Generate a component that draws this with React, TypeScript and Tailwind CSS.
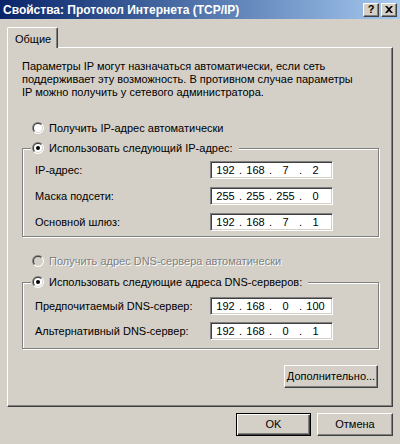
import React from "react";

const font = "font-['Liberation_Sans',Arial,sans-serif]";

function Radio({ checked, disabled }: { checked?: boolean; disabled?: boolean }) {
  return (
    <svg width="12" height="12" viewBox="0 0 12 12" className="shrink-0">
      <path d="M1.757 10.243 A6 6 0 0 1 10.243 1.757 Z" fill="#808080" />
      <path d="M1.757 10.243 A6 6 0 0 0 10.243 1.757 Z" fill="#ffffff" />
      <path d="M2.464 9.536 A5 5 0 0 1 9.536 2.464 Z" fill="#404040" />
      <path d="M2.464 9.536 A5 5 0 0 0 9.536 2.464 Z" fill="#d4d0c8" />
      <circle cx="6" cy="6" r="4" fill={disabled ? "#d4d0c8" : "#ffffff"} />
      {checked && <circle cx="6" cy="6" r="2" fill="#000000" />}
    </svg>
  );
}

function RadioRow({
  label,
  checked,
  disabled,
}: {
  label: string;
  checked?: boolean;
  disabled?: boolean;
}) {
  return (
    <div className="flex items-center h-[16px] gap-[5px]">
      <Radio checked={checked} disabled={disabled} />
      <span
        className={
          disabled
            ? "text-[#808080] [text-shadow:1px_1px_0_#ffffff] whitespace-nowrap"
            : "whitespace-nowrap"
        }
      >
        {label}
      </span>
    </div>
  );
}

function IpBox({ parts }: { parts: string[] }) {
  return (
    <div className="w-[123px] h-[18px] bg-white border border-t-[#808080] border-l-[#808080] border-b-white border-r-white shadow-[inset_1px_1px_0_#404040,inset_-1px_-1px_0_#d4d0c8] flex items-center pl-[1px]">
      {parts.map((p, i) => (
        <React.Fragment key={i}>
          <span className="w-[27px] text-center">{p}</span>
          {i < 3 && <span className="w-[3px] text-center">.</span>}
        </React.Fragment>
      ))}
    </div>
  );
}

function Field({ label, parts }: { label: string; parts: string[] }) {
  return (
    <div className="flex items-center">
      <span className="w-[175px] whitespace-nowrap">{label}</span>
      <IpBox parts={parts} />
    </div>
  );
}

function Group({
  legend,
  children,
  className,
}: {
  legend: React.ReactNode;
  children: React.ReactNode;
  className?: string;
}) {
  return (
    <div
      className={`border border-[#808080] shadow-[1px_1px_0_#ffffff,inset_1px_1px_0_#ffffff] flex flex-col pl-[12px] ${className}`}
    >
      <div className="-mt-[9px] -ml-[4px] self-start bg-[#d4d0c8] pl-[1px] pr-[6px]">
        {legend}
      </div>
      {children}
    </div>
  );
}

function Button({
  children,
  isDefault,
  className,
}: {
  children: React.ReactNode;
  isDefault?: boolean;
  className?: string;
}) {
  const frame = isDefault
    ? "border border-black shadow-[inset_1px_1px_0_#ffffff,inset_-1px_-1px_0_#404040,inset_-2px_-2px_0_#808080]"
    : "border border-t-white border-l-white border-b-[#404040] border-r-[#404040] shadow-[inset_-1px_-1px_0_#808080]";
  return (
    <button
      className={`h-[23px] bg-[#d4d0c8] flex items-center justify-center ${frame} ${className}`}
    >
      {children}
    </button>
  );
}

function CaptionButton({ children }: { children: React.ReactNode }) {
  return (
    <div className="w-[16px] h-[14px] bg-[#d4d0c8] border border-t-white border-l-white border-b-[#404040] border-r-[#404040] shadow-[inset_-1px_-1px_0_#808080] flex items-center justify-center">
      {children}
    </div>
  );
}

export default function App() {
  return (
    <div
      className={`w-[400px] h-[444px] bg-[#d4d0c8] flex flex-col text-[11px] text-black ${font}`}
    >
      {/* Title bar */}
      <div className="h-[19px] bg-gradient-to-r from-[#0a246a] to-[#a6caf0] flex items-center justify-between pl-[3px] pr-[3px]">
        <span className="text-white font-bold text-[12px] whitespace-nowrap">
          Свойства: Протокол Интернета (TCP/IP)
        </span>
        <div className="flex gap-[2px]">
          <CaptionButton>
            <span className="font-bold text-[11px] leading-none -mt-[1px]">?</span>
          </CaptionButton>
          <CaptionButton>
            <svg width="8" height="7" viewBox="0 0 8 7">
              <path d="M0 0 L2 0 L4 2 L6 0 L8 0 L5 3.5 L8 7 L6 7 L4 5 L2 7 L0 7 L3 3.5 Z" fill="#000" />
            </svg>
          </CaptionButton>
        </div>
      </div>

      <div className="pl-[7px] pt-[8px]">
        {/* Tab strip */}
        <div className="flex h-[20px]">
          <div className="relative z-10 h-[21px] w-[51px] bg-[#d4d0c8] border-t border-l border-white border-r border-r-[#404040] shadow-[inset_-1px_0_0_#808080] rounded-t-[2px] flex items-start pl-[7px] pt-[3px]">
            Общие
          </div>
        </div>

        {/* Panel */}
        <div className="w-[386px] h-[360px] border border-t-white border-l-white border-b-[#404040] border-r-[#404040] shadow-[inset_-1px_-1px_0_#808080] pl-[14px] pr-[13px] pt-[12px] flex flex-col">
          <p className="leading-[13px]">
            Параметры IP могут назначаться автоматически, если сеть
            <br />
            поддерживает эту возможность. В противном случае параметры
            <br />
            IP можно получить у сетевого администратора.
          </p>

          <div className="mt-[21px] ml-[10px]">
            <RadioRow label="Получить IP-адрес автоматически" />
          </div>

          <Group
            className="mt-[12px] pb-[5px]"
            legend={<RadioRow label="Использовать следующий IP-адрес:" checked />}
          >
            <div className="mt-[5px] flex flex-col gap-[8px]">
              <Field label="IP-адрес:" parts={["192", "168", "7", "2"]} />
              <Field label="Маска подсети:" parts={["255", "255", "255", "0"]} />
              <Field label="Основной шлюз:" parts={["192", "168", "7", "1"]} />
            </div>
          </Group>

          <div className="mt-[16px] ml-[10px]">
            <RadioRow label="Получить адрес DNS-сервера автоматически" disabled />
          </div>

          <Group
            className="mt-[13px] pb-[8px]"
            legend={<RadioRow label="Использовать следующие адреса DNS-серверов:" checked />}
          >
            <div className="mt-[7px] flex flex-col gap-[7px]">
              <Field label="Предпочитаемый DNS-сервер:" parts={["192", "168", "0", "100"]} />
              <Field label="Альтернативный DNS-сервер:" parts={["192", "168", "0", "1"]} />
            </div>
          </Group>

          <div className="mt-[16px] flex justify-end pr-[1px]">
            <Button className="w-[94px]">Дополнительно...</Button>
          </div>
        </div>
      </div>

      {/* Footer */}
      <div className="flex justify-end gap-[6px] pr-[7px] pt-[6px]">
        <Button isDefault className="w-[75px]">
          OK
        </Button>
        <Button className="w-[76px]">Отмена</Button>
      </div>
    </div>
  );
}
